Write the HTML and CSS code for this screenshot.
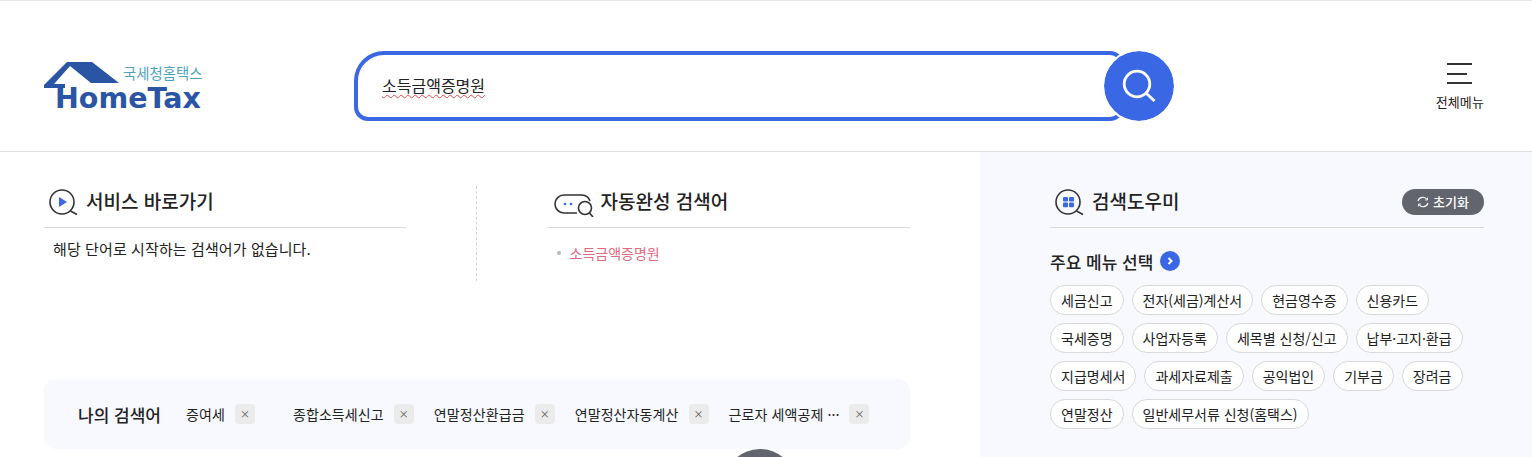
FILE: index.html
```html
<!DOCTYPE html>
<html lang="ko">
<head>
    <meta charset="UTF-8">
    <meta name="viewport" content="width=device-width, initial-scale=1.0">
    <title>HomeTax 통합검색</title>
    <link rel="stylesheet" href="styles.css">
</head>
<body>

    <header class="top">
        <a class="logo">
            <svg class="logo-house" width="76" height="27" viewBox="0 0 76 27">
                <path d="M0 23 L23 0 H48 L75 21 H47 L26 4 L10 22 H21 V26 H0 Z" fill="#2a55a4"/>
            </svg>
            <span class="logo-ko">국세청홈택스</span>
            <span class="logo-en">HomeTax</span>
        </a>

        <div class="search">
            <div class="search-box"><span class="search-text">소득금액증명원</span></div>
            <button class="search-btn">
                <svg width="36" height="36" viewBox="0 0 36 36" fill="none" stroke="#fff" stroke-width="2.800">
                    <circle cx="16" cy="16" r="12.800"/>
                    <path d="M25.500 25.500 L33.500 33"/>
                </svg>
            </button>
        </div>

        <a class="all-menu">
            <span class="burger"><i></i><i class="short"></i><i></i></span>
            <span>전체메뉴</span>
        </a>
    </header>

    <main class="content">
        <section class="left">
            <div class="columns">
                <div class="col">
                    <h2 class="col-title">
                        <svg width="30" height="30" viewBox="0 0 30 30" fill="none" stroke="#333" stroke-width="1.600">
                            <circle cx="13" cy="15" r="12"/>
                            <path d="M21.500 24 L28 27.500"/>
                            <path d="M10 10 L18 15 L10 20 Z" fill="#3a68e5" stroke="none"/>
                        </svg>
                        서비스 바로가기
                    </h2>
                    <p class="empty">해당 단어로 시작하는 검색어가 없습니다.</p>
                </div>
                <div class="divider"></div>
                <div class="col">
                    <h2 class="col-title">
                        <svg width="40" height="30" viewBox="0 0 40 30" fill="none" stroke="#333" stroke-width="1.600">
                            <path d="M23 26 H10 a9 9 0 0 1 0 -18 H28 a9 9 0 0 1 8 6"/>
                            <circle cx="31" cy="21" r="6.500"/>
                            <path d="M35.500 26 L39 30"/>
                            <circle cx="11" cy="17" r="1.300" fill="#3a68e5" stroke="none"/>
                            <circle cx="17" cy="17" r="1.300" fill="#3a68e5" stroke="none"/>
                        </svg>
                        자동완성 검색어
                    </h2>
                    <ul class="suggest">
                        <li>소득금액증명원</li>
                    </ul>
                </div>
            </div>

            <div class="recent">
                <strong class="recent-title">나의 검색어</strong>
                <div class="recent-item item-a"><span>증여세</span><button class="del">×</button></div>
                <div class="recent-item"><span>종합소득세신고</span><button class="del">×</button></div>
                <div class="recent-item"><span>연말정산환급금</span><button class="del">×</button></div>
                <div class="recent-item"><span>연말정산자동계산</span><button class="del">×</button></div>
                <div class="recent-item"><span>근로자 세액공제 ···</span><button class="del">×</button></div>
            </div>

            <div class="float-circle"></div>
        </section>

        <aside class="right">
            <div class="help-head">
                <h2 class="help-title">
                    <svg width="30" height="30" viewBox="0 0 30 30" fill="none" stroke="#333" stroke-width="1.600">
                        <circle cx="13" cy="15" r="12"/>
                        <path d="M21.500 24 L28 27.500"/>
                        <g fill="#3a68e5" stroke="none">
                            <rect x="8" y="10" width="5" height="4.600" rx="1"/>
                            <rect x="14" y="10" width="5" height="4.600" rx="1"/>
                            <rect x="8" y="15.600" width="5" height="4.600" rx="1"/>
                            <rect x="14" y="15.600" width="5" height="4.600" rx="1"/>
                        </g>
                    </svg>
                    검색도우미
                </h2>
                <button class="reset">
                    <svg width="12" height="12" viewBox="0 0 12 12" fill="none" stroke="#fff" stroke-width="1.100">
                        <path d="M1 5 A5 5 0 0 1 10 3.500 M11 7 A5 5 0 0 1 2 8.500"/>
                        <path d="M10.500 1.500 V4 H8 M1.500 10.500 V8 H4" stroke-width="0.800"/>
                    </svg>
                    초기화
                </button>
            </div>

            <h3 class="menu-title">
                주요 메뉴 선택
                <span class="menu-arrow">
                    <svg width="8" height="8" viewBox="0 0 8 8" fill="none" stroke="#fff" stroke-width="2"><path d="M2.500 1 L5.500 4 L2.500 7"/></svg>
                </span>
            </h3>

            <div class="chips">
                <a class="chip">세금신고</a>
                <a class="chip">전자(세금)계산서</a>
                <a class="chip">현금영수증</a>
                <a class="chip">신용카드</a>
                <a class="chip">국세증명</a>
                <a class="chip">사업자등록</a>
                <a class="chip">세목별 신청/신고</a>
                <a class="chip">납부·고지·환급</a>
                <a class="chip">지급명세서</a>
                <a class="chip">과세자료제출</a>
                <a class="chip">공익법인</a>
                <a class="chip">기부금</a>
                <a class="chip">장려금</a>
                <a class="chip">연말정산</a>
                <a class="chip">일반세무서류 신청(홈택스)</a>
            </div>
        </aside>
    </main>

</body>
</html>
```

FILE: styles.css
```css
* {
    box-sizing: border-box;
}
html, body {
    height: 457px;
    overflow: hidden;
}
body {
    margin: 0;
    font-family: "Noto Sans CJK KR", "Noto Sans", sans-serif;
    color: #222;
    background-color: #fff;
}
button {
    font-family: inherit;
    border: 0;
    padding: 0;
}
h2, h3, p, ul {
    margin: 0;
    padding: 0;
}

/* header */
.top {
    height: 152px;
    border-top: 1px solid #e6e6e6;
    border-bottom: 1px solid #e0e0e0;
    display: flex;
    align-items: center;
    padding: 20px 48px 0 44px;
}
.logo {
    position: relative;
    width: 158px;
    height: 48px;
    margin-right: 152px;
    display: block;
}
.logo-house {
    position: absolute;
    left: 0;
    top: 0;
}
.logo-ko {
    position: absolute;
    left: 79px;
    top: 2px;
    font-size: 14.4px;
    line-height: 18px;
    color: #4fa3bd;
    white-space: nowrap;
}
.logo-en {
    position: absolute;
    left: 11px;
    top: 23px;
    font-family: "DejaVu Sans", sans-serif;
    font-size: 28.5px;
    line-height: 28px;
    font-weight: 700;
    color: #2a55a4;
}
.search {
    display: flex;
    align-items: center;
}
.search-box {
    width: 770px;
    height: 70px;
    border: 4px solid #3a68e5;
    border-radius: 30px 14px 14px 14px;
    display: flex;
    align-items: center;
    padding: 0 0 2px 24px;
}
.search-text {
    font-size: 16px;
    color: #222;
    text-decoration: underline wavy #e5484d 1px;
    text-underline-offset: 2px;
}
.search-btn {
    width: 70px;
    height: 70px;
    border-radius: 50%;
    background-color: #3a68e5;
    margin-left: -20px;
    display: flex;
    align-items: center;
    justify-content: center;
    outline: 2px solid #fff;
    position: relative;
}
.all-menu {
    margin: 2px 0 0 auto;
    display: flex;
    flex-direction: column;
    align-items: center;
    font-size: 13px;
    line-height: 18px;
    letter-spacing: 0.100px;
    color: #222;
}
.burger {
    width: 25px;
    height: 21px;
    display: flex;
    flex-direction: column;
    justify-content: space-between;
    margin-bottom: 9px;
}
.burger i {
    display: block;
    height: 2px;
    background-color: #333;
}
.burger .short {
    width: 20px;
}

/* content */
.content {
    display: flex;
    height: 305px;
    overflow: hidden;
}
.left {
    width: 980px;
    padding: 34px 70px 0 44px;
    position: relative;
}
.columns {
    display: flex;
    height: 193px;
}
.col {
    width: 362px;
}
.col:last-child {
    width: 364px;
}
.divider {
    width: 1px;
    height: 95px;
    border-left: 1px dashed #d5d5d5;
    margin: 0 70px 0 70px;
}
.col-title {
    height: 42px;
    border-bottom: 1px solid #d8d8d8;
    display: flex;
    align-items: flex-start;
    gap: 7px;
    padding: 1px 0 0 5px;
    font-size: 19px;
    line-height: 28px;
    font-weight: 500;
    color: #222;
}
.col:last-child .col-title {
    padding-left: 7px;
}
.empty {
    font-size: 15px;
    line-height: 22px;
    margin-top: 10px;
    padding-left: 9px;
    letter-spacing: 0.100px;
}
.suggest {
    list-style: none;
    margin-top: 14px;
    padding-left: 10px;
}
.suggest li {
    font-size: 14px;
    line-height: 22px;
    color: #e0697f;
    display: flex;
    align-items: center;
    gap: 9px;
}
.suggest li::before {
    content: "";
    width: 4px;
    height: 4px;
    border-radius: 50%;
    background-color: #b5b8c2;
}
.recent {
    height: 70px;
    width: 866px;
    background-color: #f8f9ff;
    border-radius: 12px;
    display: flex;
    align-items: center;
    padding-left: 34px;
}
.recent-title {
    font-size: 17px;
    font-weight: 500;
    margin-right: 25px;
}
.recent-item {
    display: flex;
    align-items: center;
    gap: 10px;
    font-size: 14px;
    letter-spacing: 0.100px;
    margin-right: 20px;
}
.item-a {
    margin-right: 38px;
}
.del {
    width: 20px;
    height: 20px;
    border-radius: 4px;
    background-color: #ebebeb;
    color: #555;
    font-size: 10px;
    line-height: 20px;
}
.float-circle {
    position: absolute;
    left: 724px;
    top: 297px;
    width: 72px;
    height: 72px;
    border-radius: 50%;
    background-color: #63656e;
}

/* search helper */
.right {
    flex: 1;
    background-color: #f8f9ff;
    padding: 34px 48px 0 70px;
}
.help-head {
    height: 42px;
    border-bottom: 1px solid #d8d8d8;
    display: flex;
    justify-content: space-between;
    align-items: flex-start;
}
.help-title {
    display: flex;
    gap: 7px;
    padding: 1px 0 0 5px;
    font-size: 19px;
    line-height: 28px;
    font-weight: 500;
}
.reset {
    width: 82px;
    height: 26px;
    margin-top: 3px;
    padding-bottom: 1px;
    border-radius: 13px;
    background-color: #63656e;
    color: #fff;
    font-size: 13px;
    font-weight: 500;
    display: flex;
    align-items: center;
    justify-content: center;
    gap: 4px;
}
.menu-title {
    display: flex;
    align-items: center;
    gap: 7px;
    margin-top: 22px;
    height: 22px;
    font-size: 17px;
    font-weight: 500;
}
.menu-arrow {
    width: 20px;
    height: 20px;
    border-radius: 50%;
    background-color: #3a68e5;
    display: flex;
    align-items: center;
    justify-content: center;
}
.chips {
    display: flex;
    flex-wrap: wrap;
    gap: 8px;
    margin-top: 13px;
}
.chip {
    height: 30px;
    padding: 0 10px;
    border: 1px solid #d8d8d8;
    border-radius: 15px;
    background-color: #fff;
    font-size: 14px;
    line-height: 28px;
    color: #222;
    white-space: nowrap;
}
```
